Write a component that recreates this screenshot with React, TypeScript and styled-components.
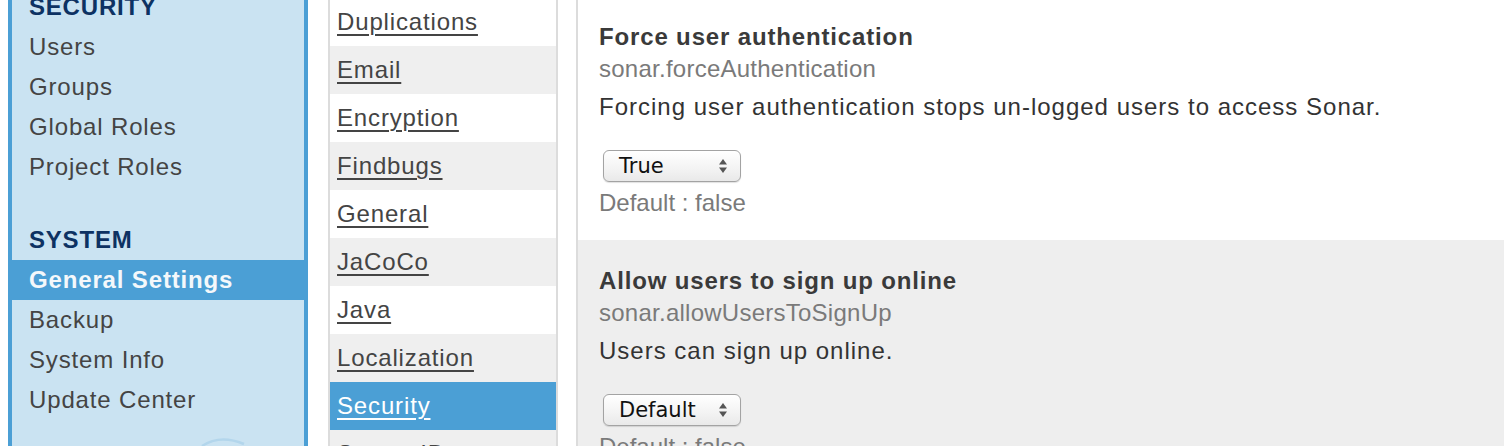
import React from "react";
import styled, { createGlobalStyle } from "styled-components";

const GlobalStyle = createGlobalStyle`
  html, body {
    margin: 0;
    padding: 0;
    background: #fff;
    overflow: hidden;
  }
  body {
    font-family: "Liberation Sans", Arial, sans-serif;
    color: #444;
  }
`;

const Page = styled.div`
  display: flex;
  align-items: flex-start;
  height: 446px;
  overflow: hidden;
  padding-left: 8px;
`;

const Sidebar = styled.nav`
  position: relative;
  flex: 0 0 292px;
  height: 446px;
  background: #cae3f2;
  border-left: 4px solid #4b9fd5;
  border-right: 4px solid #4b9fd5;
  overflow: hidden;
`;

const SideHeading = styled.div<{ $first?: boolean }>`
  height: 40px;
  line-height: 40px;
  padding-left: 17px;
  margin-top: ${(p) => (p.$first ? "-13px" : "33px")};
  font-size: 24px;
  font-weight: bold;
  letter-spacing: 0.8px;
  color: #0d3263;
`;

const SideItem = styled.div<{ $active?: boolean }>`
  height: 40px;
  line-height: 40px;
  padding-left: 17px;
  font-size: 24px;
  letter-spacing: 0.85px;
  font-weight: ${(p) => (p.$active ? "bold" : "normal")};
  color: ${(p) => (p.$active ? "#f4f8fb" : "#444")};
  background: ${(p) => (p.$active ? "#4b9fd5" : "transparent")};
  white-space: nowrap;
`;

const Watermark = styled.svg`
  position: absolute;
  left: 180px;
  top: 430px;
`;

const CategoryList = styled.ul`
  list-style: none;
  margin: -2px 0 0 20px;
  padding: 0;
  flex: 0 0 226px;
  border-left: 2px solid #dcdcdc;
  border-right: 2px solid #dcdcdc;
`;

const Category = styled.li<{ $shade: "white" | "gray" | "active" }>`
  height: 48px;
  line-height: 48px;
  padding-left: 7px;
  font-size: 24px;
  letter-spacing: 0.85px;
  white-space: nowrap;
  background: ${(p) =>
    p.$shade === "active" ? "#4b9fd5" : p.$shade === "gray" ? "#efefef" : "#fff"};

  a {
    color: ${(p) => (p.$shade === "active" ? "#fff" : "#444")};
    text-decoration: underline;
    text-decoration-thickness: 2px;
    text-underline-offset: 4px;
  }
`;

const SettingsPanel = styled.section`
  flex: 1;
  margin-left: 18px;
  margin-top: -4px;
  border-left: 2px solid #dcdcdc;
  min-height: 460px;
`;

const Setting = styled.div<{ $shaded?: boolean }>`
  padding: 25px 21px 21px;
  background: ${(p) => (p.$shaded ? "#eeeeee" : "#fff")};
`;

const Title = styled.div`
  font-size: 24px;
  line-height: 32px;
  font-weight: bold;
  letter-spacing: 0.85px;
  color: #3a3a3a;
`;

const Key = styled.div`
  font-size: 24px;
  line-height: 32px;
  letter-spacing: 0.25px;
  color: #7a7a7a;
`;

const Description = styled.div`
  font-size: 24px;
  line-height: 32px;
  margin-top: 6px;
  letter-spacing: 1px;
  color: #333;
`;

const SelectBox = styled.div`
  display: flex;
  align-items: center;
  justify-content: space-between;
  box-sizing: border-box;
  width: 138px;
  height: 32px;
  margin: 27px 0 0 4px;
  padding: 0 12px 0 15px;
  border: 1px solid #a3a3a3;
  border-radius: 6px;
  background: linear-gradient(#ffffff, #f3f3f3 60%, #e9e9e9);
  box-shadow: 0 1px 1px rgba(0, 0, 0, 0.12);
  font-family: "DejaVu Sans", "Liberation Sans", sans-serif;
  font-size: 21px;
  color: #111;
`;

const DefaultNote = styled.div`
  font-size: 24px;
  line-height: 32px;
  margin-top: 5px;
  color: #7a7a7a;
`;

const Arrows = () => (
  <svg width="10" height="16" viewBox="0 0 10 16">
    <path d="M5 1 L9 6.5 H1 Z" fill="#555" />
    <path d="M5 15 L9 9.5 H1 Z" fill="#555" />
  </svg>
);

const categories = [
  "Duplications",
  "Email",
  "Encryption",
  "Findbugs",
  "General",
  "JaCoCo",
  "Java",
  "Localization",
  "Security",
  "Server ID",
];

const settings = [
  {
    title: "Force user authentication",
    key: "sonar.forceAuthentication",
    description: "Forcing user authentication stops un-logged users to access Sonar.",
    value: "True",
  },
  {
    title: "Allow users to sign up online",
    key: "sonar.allowUsersToSignUp",
    description: "Users can sign up online.",
    value: "Default",
  },
];

export default function App() {
  return (
    <>
      <GlobalStyle />
      <Page>
        <Sidebar>
          <SideHeading $first>SECURITY</SideHeading>
          <SideItem>Users</SideItem>
          <SideItem>Groups</SideItem>
          <SideItem>Global Roles</SideItem>
          <SideItem>Project Roles</SideItem>
          <SideHeading>SYSTEM</SideHeading>
          <SideItem $active>General Settings</SideItem>
          <SideItem>Backup</SideItem>
          <SideItem>System Info</SideItem>
          <SideItem>Update Center</SideItem>
          <Watermark width="70" height="20" viewBox="0 0 70 20">
            <path d="M10 16 Q28 4 52 14" stroke="#b3d6ec" strokeWidth="2.5" fill="none" />
          </Watermark>
        </Sidebar>

        <CategoryList>
          {categories.map((c, i) => (
            <Category
              key={c}
              $shade={c === "Security" ? "active" : i % 2 === 1 ? "gray" : "white"}
            >
              <a>{c}</a>
            </Category>
          ))}
        </CategoryList>

        <SettingsPanel>
          {settings.map((s, i) => (
            <Setting key={s.key} $shaded={i % 2 === 1}>
              <Title>{s.title}</Title>
              <Key>{s.key}</Key>
              <Description>{s.description}</Description>
              <SelectBox>
                <span>{s.value}</span>
                <Arrows />
              </SelectBox>
              <DefaultNote>Default : false</DefaultNote>
            </Setting>
          ))}
        </SettingsPanel>
      </Page>
    </>
  );
}
